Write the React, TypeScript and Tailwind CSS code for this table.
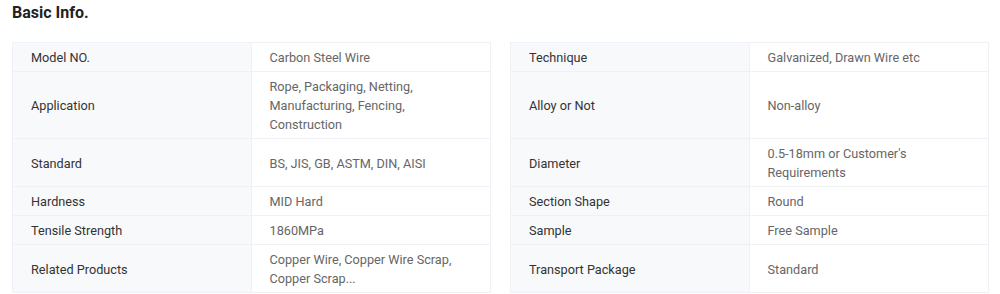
import React from "react";

type Row = { label: string; value: React.ReactNode };

const left: Row[] = [
  { label: "Model NO.", value: "Carbon Steel Wire" },
  { label: "Application", value: <>Rope, Packaging, Netting,<br />Manufacturing, Fencing,<br />Construction</> },
  { label: "Standard", value: "BS, JIS, GB, ASTM, DIN, AISI" },
  { label: "Hardness", value: "MID Hard" },
  { label: "Tensile Strength", value: "1860MPa" },
  { label: "Related Products", value: <>Copper Wire, Copper Wire Scrap,<br />Copper Scrap...</> },
];

const right: Row[] = [
  { label: "Technique", value: "Galvanized, Drawn Wire etc" },
  { label: "Alloy or Not", value: "Non-alloy" },
  { label: "Diameter", value: <>0.5-18mm or Customer's<br />Requirements</> },
  { label: "Section Shape", value: "Round" },
  { label: "Sample", value: "Free Sample" },
  { label: "Transport Package", value: "Standard" },
];

const B = "border-[#eef1f5]";

function Cells({ row, first, last }: { row: Row; first: boolean; last: boolean }) {
  const t = first ? "border-t" : "";
  const b = "border-b";
  return (
    <>
      <div
        className={`flex items-center bg-[#f8f9fb] pl-[18px] pr-3 pt-[5px] pb-[4px] text-[#333333] border-l border-r ${t} ${b} ${B}`}
      >
        {row.label}
      </div>
      <div
        className={`flex items-center pl-[18px] pr-3 pt-[5px] pb-[4px] text-[#666666] border-r ${t} ${b} ${B}`}
      >
        <div>{row.value}</div>
      </div>
      {last ? null : null}
    </>
  );
}

export default function App() {
  return (
    <div
      className="w-[1000px] h-[294px] bg-white overflow-hidden pl-[12px] pr-[11px]"
      style={{ fontFamily: "Roboto, 'Liberation Sans', Arial, sans-serif" }}
    >
      <h2 className="text-[16px] font-bold text-[#222222] leading-[20px] pt-[3px] h-[42px]">
        Basic Info.
      </h2>
      <div className="grid grid-cols-[1fr_1fr_19px_1fr_1fr] text-[12.7px] leading-[19px]">
        {left.map((l, i) => (
          <React.Fragment key={i}>
            <Cells row={l} first={i === 0} last={i === left.length - 1} />
            <div />
            <Cells row={right[i]} first={i === 0} last={i === left.length - 1} />
          </React.Fragment>
        ))}
      </div>
    </div>
  );
}
